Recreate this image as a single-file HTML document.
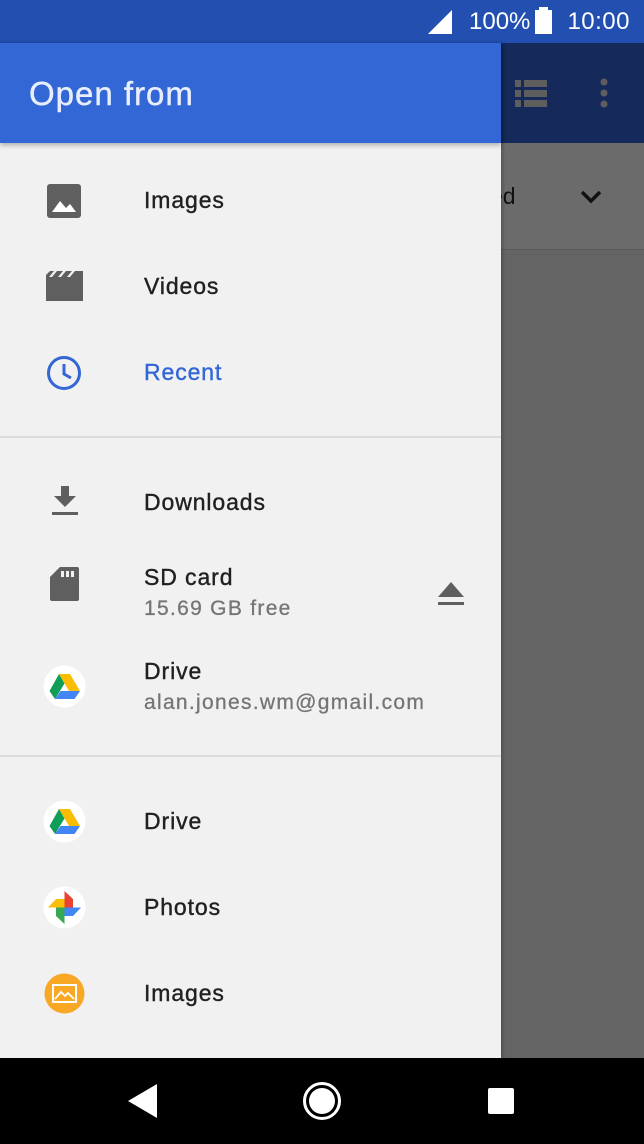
<!DOCTYPE html>
<html><head><meta charset="utf-8"><style>
*{margin:0;padding:0;box-sizing:border-box}
body{width:644px;height:1144px;overflow:hidden;position:relative;background:#646464;font-family:"Liberation Sans",Roboto,sans-serif}
.abs{position:absolute}
.t{position:absolute;left:144px;font-size:23px;letter-spacing:0.9px;color:#212121;white-space:nowrap;-webkit-text-stroke:0.4px #212121}
.s{position:absolute;left:144px;font-size:21px;letter-spacing:1.3px;color:#757575;white-space:nowrap;-webkit-text-stroke:0.3px #757575}
.ic{position:absolute}
</style></head><body>
<div class="abs" style="left:0;top:0;width:644px;height:43px;background:#2350b0"></div>
<div class="abs" style="left:469px;top:8px;color:#fff;font-size:24px">100%</div>
<div class="abs" style="right:14px;top:8px;color:#fff;font-size:24px;letter-spacing:0.5px">10:00</div>
<svg class="abs" style="left:428px;top:10px" width="24" height="24"><path d="M0 24L24 0V24Z" fill="#fff"/></svg>
<div class="abs" style="left:535px;top:10px;width:17px;height:24px;background:#fff"></div>
<div class="abs" style="left:539px;top:7px;width:9px;height:4px;background:#fff"></div>
<div class="abs" style="left:501px;top:43px;width:143px;height:100px;background:#152a5a"></div>
<svg class="abs" style="left:515px;top:80px" width="32" height="27"><g fill="#5e5e5e"><rect x="0" y="0" width="6" height="7"/><rect x="9" y="0" width="23" height="7"/><rect x="0" y="10" width="6" height="7"/><rect x="9" y="10" width="23" height="7"/><rect x="0" y="20" width="6" height="7"/><rect x="9" y="20" width="23" height="7"/></g></svg>
<svg class="abs" style="left:598px;top:78px" width="12" height="30"><g fill="#5e5e5e"><circle cx="6" cy="4" r="3.5"/><circle cx="6" cy="15" r="3.5"/><circle cx="6" cy="26" r="3.5"/></g></svg>
<div class="abs" style="left:501px;top:143px;width:143px;height:107px;background:#6b6b6b;border-bottom:1px solid #5a5a5a"></div>
<div class="abs" style="left:490px;top:183px;font-size:23px;color:#111">ed</div>
<svg class="abs" style="left:579px;top:189px" width="24" height="16"><path d="M3 3L12 12L21 3" stroke="#111" stroke-width="3.5" fill="none"/></svg>
<div class="abs" style="left:0;top:43px;width:501px;height:1015px;background:#f1f1f1;box-shadow:2px 0 3px rgba(0,0,0,.2)"></div>
<div class="abs" style="left:0;top:43px;width:501px;height:100px;background:#3367d6;box-shadow:0 2px 5px rgba(0,0,0,.3)"></div>
<div class="abs" style="left:29px;top:75px;font-size:33px;letter-spacing:1px;color:#e8eefc;-webkit-text-stroke:0.4px #e8eefc">Open from</div>
<svg class="ic" style="left:47px;top:184px" width="34" height="34"><rect width="34" height="34" rx="3" fill="#5f5f5f"/><path d="M5 28L13 17L19 24L23 20L29 28Z" fill="#fff"/></svg>
<div class="t" style="top:187px">Images</div>
<svg class="ic" style="left:46px;top:271px" width="37" height="30"><path d="M0 4L4 0H37V30H0Z" fill="#5f5f5f"/><g fill="#f1f1f1"><path d="M8 0L11 0L6 6H3Z"/><path d="M17 0H20L15 6H12Z"/><path d="M26 0H29L24 6H21Z"/></g></svg>
<div class="t" style="top:273px">Videos</div>
<svg class="ic" style="left:46px;top:355px" width="36" height="36"><circle cx="18" cy="18" r="15.5" fill="none" stroke="#3367d6" stroke-width="3"/><path d="M18 9V19L25 23" stroke="#3367d6" stroke-width="3" fill="none"/></svg>
<div class="t" style="top:359px;color:#3367d6;-webkit-text-stroke:0.4px #3367d6">Recent</div>
<div class="abs" style="left:0;top:436px;width:501px;height:2px;background:#dcdcdc"></div>
<svg class="ic" style="left:52px;top:486px" width="26" height="30"><path d="M9 0H17V10H24L13 21L2 10H9Z" fill="#5f5f5f"/><rect x="0" y="26" width="26" height="3" fill="#5f5f5f"/></svg>
<div class="t" style="top:489px">Downloads</div>
<svg class="ic" style="left:50px;top:567px" width="29" height="34"><path d="M10 0H27Q29 0 29 2V32Q29 34 27 34H2Q0 34 0 32V10Z" fill="#5f5f5f"/><g fill="#f1f1f1"><rect x="11" y="4" width="3" height="6"/><rect x="16" y="4" width="3" height="6"/><rect x="21" y="4" width="3" height="6"/></g></svg>
<div class="t" style="top:564px">SD card</div>
<div class="s" style="top:597px">15.69 GB free</div>
<svg class="ic" style="left:438px;top:582px" width="26" height="24"><path d="M13 0L26 15H0Z" fill="#5f5f5f"/><rect y="20" width="26" height="3" fill="#5f5f5f"/></svg>
<svg class="ic" style="left:43px;top:665px" width="43" height="43"><circle cx="21.5" cy="21.5" r="21" fill="#fff"/><path d="M16 9H27L37 26H26Z" fill="#fbbc04"/><path d="M16 9L21.5 18.5L12 34L6.5 26Z" fill="#0f9d58"/><path d="M12 34L17.5 26H37L31.5 34Z" fill="#4285f4"/></svg>
<div class="t" style="top:658px">Drive</div>
<div class="s" style="top:691px">alan.jones.wm@gmail.com</div>
<div class="abs" style="left:0;top:755px;width:501px;height:2px;background:#dcdcdc"></div>
<svg class="ic" style="left:43px;top:800px" width="43" height="43"><circle cx="21.5" cy="21.5" r="21" fill="#fff"/><path d="M16 9H27L37 26H26Z" fill="#fbbc04"/><path d="M16 9L21.5 18.5L12 34L6.5 26Z" fill="#0f9d58"/><path d="M12 34L17.5 26H37L31.5 34Z" fill="#4285f4"/></svg>
<div class="t" style="top:808px">Drive</div>
<svg class="ic" style="left:43px;top:886px" width="43" height="43"><circle cx="21.5" cy="21.5" r="21" fill="#fff"/><path d="M21.5 21.5V5L30 13V21.5Z" fill="#ea4335"/><path d="M21.5 21.5H38L30 30H21.5Z" fill="#4285f4"/><path d="M21.5 21.5V38L13 30V21.5Z" fill="#34a853"/><path d="M21.5 21.5H5L13 13H21.5Z" fill="#fbbc04"/></svg>
<div class="t" style="top:894px">Photos</div>
<svg class="ic" style="left:44px;top:973px" width="41" height="41"><circle cx="20.5" cy="20.5" r="20" fill="#f9a825"/><rect x="9" y="12" width="23" height="17" fill="none" stroke="#fff" stroke-width="2"/><path d="M11 26L17 19L21 23L24 20L30 26" stroke="#fff" stroke-width="1.8" fill="none"/></svg>
<div class="t" style="top:980px">Images</div>
<div class="abs" style="left:0;top:1058px;width:644px;height:86px;background:#000"></div>
<svg class="abs" style="left:128px;top:1084px" width="30" height="34"><path d="M29 0V34L0 17Z" fill="#fff"/></svg>
<svg class="abs" style="left:302px;top:1081px" width="40" height="40"><circle cx="20" cy="20" r="17.5" fill="none" stroke="#fff" stroke-width="3"/><circle cx="20" cy="20" r="13" fill="#fff"/></svg>
<div class="abs" style="left:488px;top:1088px;width:26px;height:26px;background:#fff;border-radius:2px"></div>
</body></html>
